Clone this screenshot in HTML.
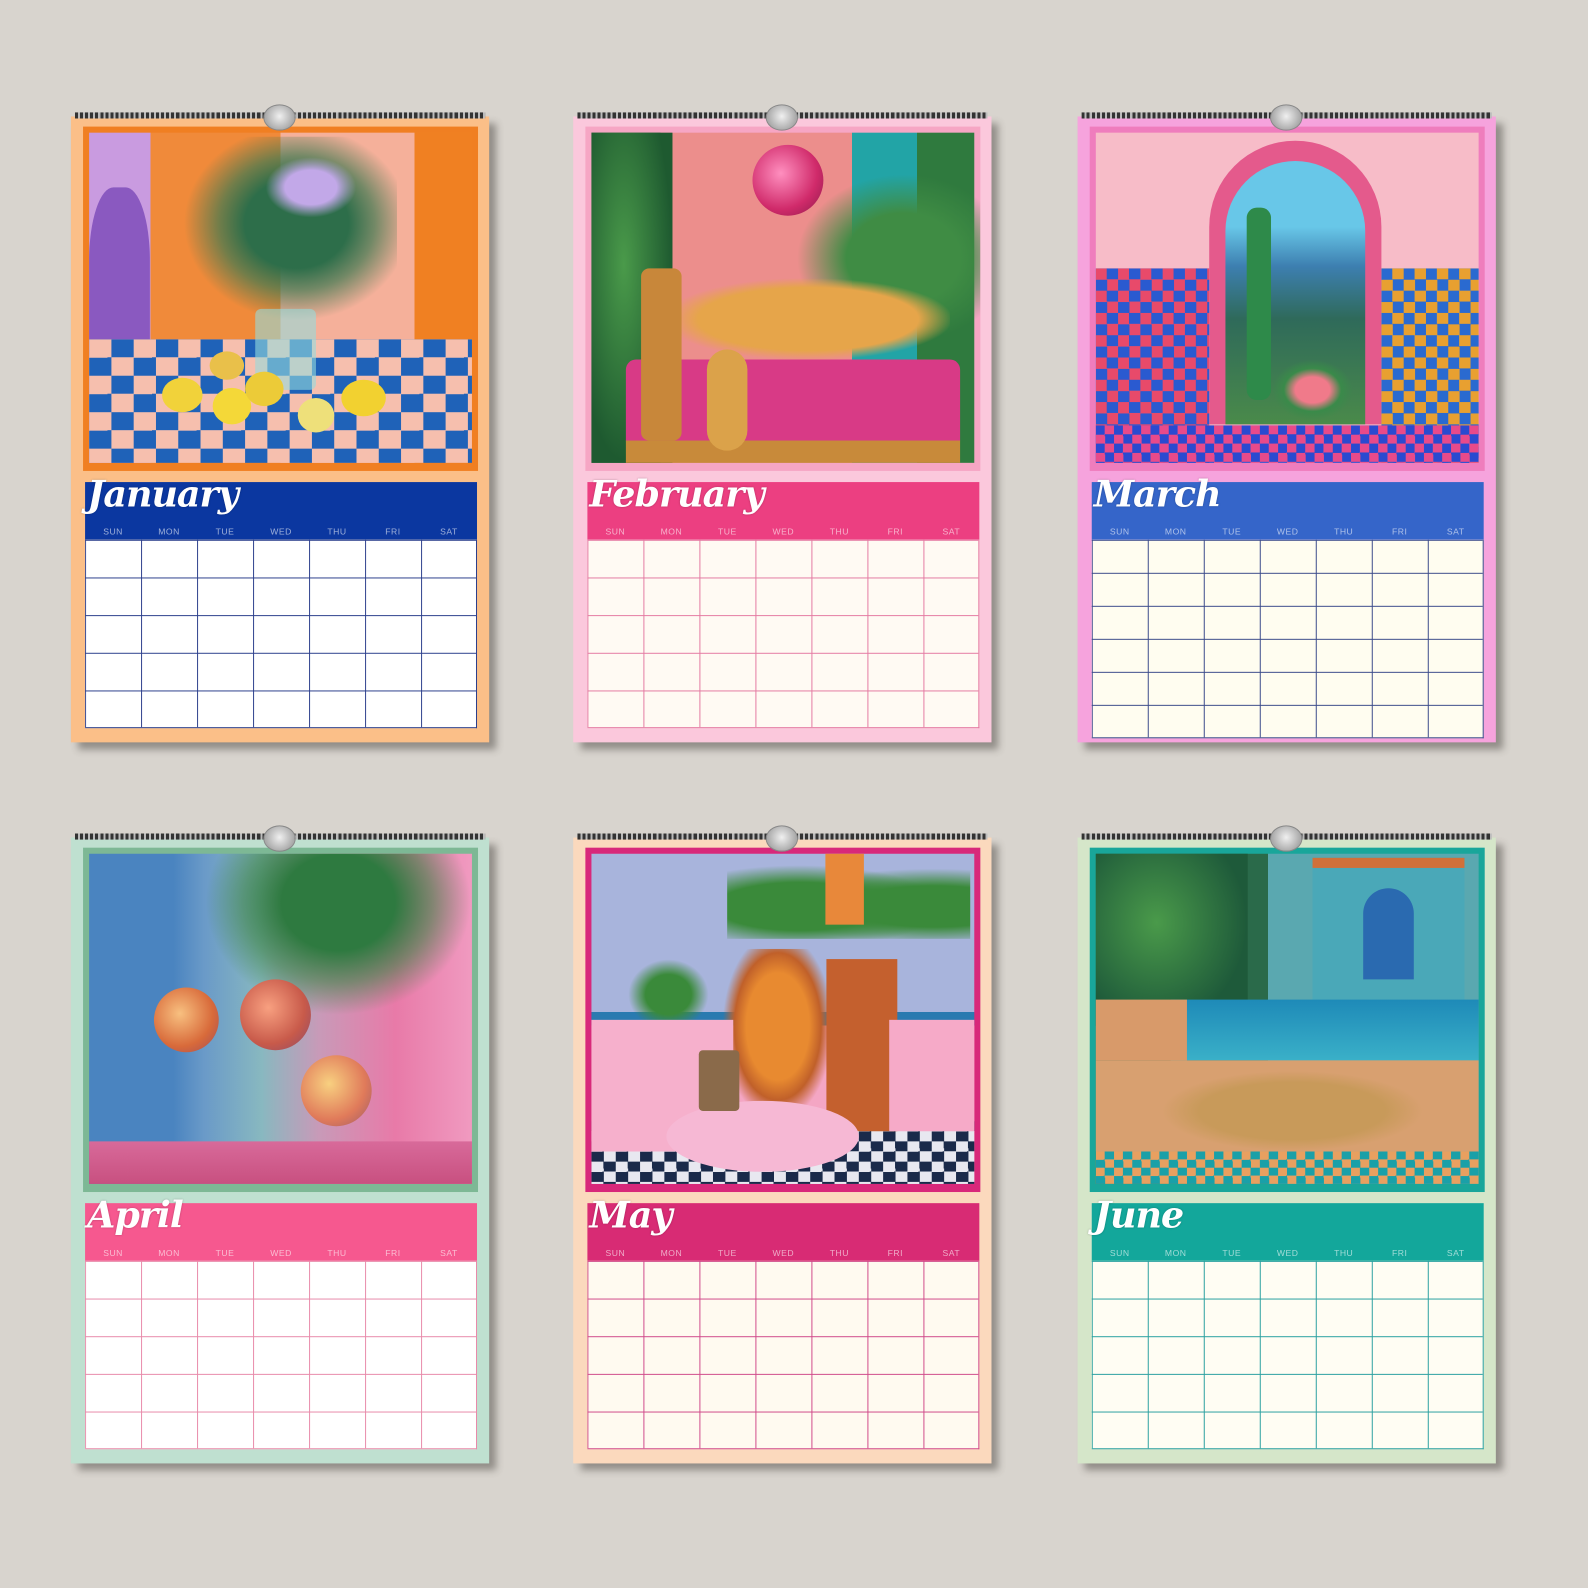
<!DOCTYPE html>
<html><head><meta charset="utf-8">
<style>
*{margin:0;padding:0;box-sizing:border-box}
body{width:1588px;height:1588px;background:#d8d4ce;position:relative;overflow:hidden;font-family:"Liberation Sans",sans-serif}
#wrap{position:absolute;left:0;top:0;width:1568px;height:1568px;transform:scale(1.01276);transform-origin:0 0}
.cal{position:absolute;width:413px;height:630px}
.page{position:absolute;left:0;top:12px;width:413px;height:618px;box-shadow:7px 7px 7px rgba(60,55,50,.45)}
.spiral{position:absolute;left:4px;right:4px;top:8px;height:6px;background:repeating-linear-gradient(90deg,#333 0 3px,#bbb 3px 5px);z-index:3}
.hook{position:absolute;left:190px;top:0;width:32px;height:26px;border-radius:50%;background:radial-gradient(circle at 50% 45%,#f0f0f0,#aaa 70%);z-index:4;border:1px solid #888}
.img{position:absolute;left:12px;top:22px;width:390px;height:340px;overflow:hidden}
.img div{position:absolute}
.hdr{position:absolute;left:14px;top:373px;width:387px;height:57px}
.ttl{position:absolute;left:2px;top:-9px;font-family:"DejaVu Serif","Liberation Serif",serif;font-weight:bold;font-style:italic;font-size:36px;color:#fff;letter-spacing:-1px;text-shadow:0 0 2px rgba(0,0,0,.25)}
.days{position:absolute;left:0;right:0;bottom:3px;display:flex;font-size:8.5px;color:rgba(255,255,255,.6);letter-spacing:.5px}
.days span{flex:1;text-align:center}
.grid{position:absolute;left:14px;top:430px;width:387px}
</style></head><body><div id="wrap">

<!-- JANUARY -->
<div class="cal" style="left:70px;top:103px">
<div class="page" style="background:#fbbf88"></div>
<div class="spiral"></div><div class="hook"></div>
<div class="img" style="background:#f07f22;">
 <div style="left:6px;top:6px;width:378px;height:326px;background:linear-gradient(90deg,#c99be0 0 16%,#f08a3a 16% 50%,#f5b09a 50% 85%,#f08022 85%)"></div>
 <div style="left:6px;top:60px;width:60px;height:180px;background:#7a48b8;border-radius:40% 40% 10% 10%;opacity:.8"></div>
 <div style="left:6px;top:210px;width:378px;height:122px;background:repeating-conic-gradient(#1f62b8 0 25%,#f6bfae 0 50%) 0 0/44px 36px"></div>
 <div style="left:90px;top:10px;width:220px;height:190px;background:radial-gradient(ellipse at 55% 45%,#2d6e4a 0 30%,rgba(60,120,80,.7) 45%,transparent 65%)"></div>
 <div style="left:180px;top:30px;width:90px;height:60px;background:radial-gradient(#c2a8e8 0 40%,transparent 70%)"></div>
 <div style="left:170px;top:180px;width:60px;height:80px;background:rgba(150,220,220,.6);border-radius:6px"></div>
 <div style="left:78px;top:248px;width:40px;height:34px;background:#f1d23a;border-radius:50%"></div>
 <div style="left:128px;top:258px;width:38px;height:36px;background:#f4d838;border-radius:50%"></div>
 <div style="left:160px;top:242px;width:38px;height:34px;background:#eccb38;border-radius:50%"></div>
 <div style="left:125px;top:222px;width:34px;height:28px;background:#e9c04a;border-radius:50%"></div>
 <div style="left:212px;top:268px;width:36px;height:34px;background:#eee07a;border-radius:50%"></div>
 <div style="left:255px;top:250px;width:44px;height:36px;background:#f2d130;border-radius:50%"></div>
</div>
<div class="hdr" style="background:#0b37a0"><div class="ttl">January</div><div class="days"><span>SUN</span><span>MON</span><span>TUE</span><span>WED</span><span>THU</span><span>FRI</span><span>SAT</span></div></div>
<div class="grid" style="height:186px;background:#fff;background-image:linear-gradient(90deg,#2c3f8c 1px,transparent 1px),linear-gradient(#2c3f8c 1px,transparent 1px);background-size:55.3px 37.2px;border-right:1px solid #2c3f8c;border-bottom:1px solid #2c3f8c"></div>
</div>

<!-- FEBRUARY -->
<div class="cal" style="left:566px;top:103px">
<div class="page" style="background:#fbc8dc"></div>
<div class="spiral"></div><div class="hook"></div>
<div class="img" style="background:#f6a6c4">
 <div style="left:6px;top:6px;width:378px;height:326px;background:linear-gradient(90deg,#2e6d3c 0 18%,#ec8e8c 18% 68%,#22a4a6 68% 85%,#2f7a3e 85%)"></div>
 <div style="left:6px;top:6px;width:80px;height:326px;background:radial-gradient(ellipse at 40% 40%,#4a9a4a,#1e5a30 70%)"></div>
 <div style="left:200px;top:40px;width:190px;height:180px;background:radial-gradient(ellipse at 60% 50%,#3f8c44 0 35%,transparent 65%)"></div>
 <div style="left:165px;top:18px;width:70px;height:70px;border-radius:50%;background:radial-gradient(circle at 40% 40%,#ff8fbf,#d02a6a 60%,#8a1a4a)"></div>
 <div style="left:40px;top:230px;width:330px;height:90px;background:#d83a86;border-radius:10px"></div>
 <div style="left:40px;top:310px;width:330px;height:22px;background:#c88a3a"></div>
 <div style="left:80px;top:150px;width:280px;height:80px;background:radial-gradient(ellipse,#e6a54a 0 55%,transparent 72%)"></div>
 <div style="left:55px;top:140px;width:40px;height:170px;background:#c8873a;border-radius:8px"></div>
 <div style="left:120px;top:220px;width:40px;height:100px;background:#dba24a;border-radius:20px"></div>
</div>
<div class="hdr" style="background:#ec3f81"><div class="ttl">February</div><div class="days"><span>SUN</span><span>MON</span><span>TUE</span><span>WED</span><span>THU</span><span>FRI</span><span>SAT</span></div></div>
<div class="grid" style="height:186px;background:#fffaf3;background-image:linear-gradient(90deg,#e47aa2 1px,transparent 1px),linear-gradient(#e47aa2 1px,transparent 1px);background-size:55.3px 37.2px;border-right:1px solid #e47aa2;border-bottom:1px solid #e47aa2"></div>
</div>

<!-- MARCH -->
<div class="cal" style="left:1064px;top:103px">
<div class="page" style="background:#f6a3dd"></div>
<div class="spiral"></div><div class="hook"></div>
<div class="img" style="background:#ef7dbd">
 <div style="left:6px;top:6px;width:378px;height:326px;background:#f7bcc8"></div>
 <div style="left:118px;top:14px;width:170px;height:280px;background:#e45a8c;border-radius:85px 85px 0 0"></div>
 <div style="left:134px;top:34px;width:138px;height:260px;background:linear-gradient(#68c7e8 0 25%,#3d7fb0 40%,#2f6a5a 60%,#4a8a4a);border-radius:70px 70px 0 0"></div>
 <div style="left:155px;top:80px;width:24px;height:190px;background:#2e8a4a;border-radius:10px"></div>
 <div style="left:6px;top:140px;width:112px;height:192px;background:repeating-conic-gradient(#2a5ad0 0 25%,#e84a6a 0 50%) 0 0/22px 22px"></div>
 <div style="left:288px;top:140px;width:96px;height:192px;background:repeating-conic-gradient(#e8a030 0 25%,#2a6ad0 0 50%) 0 0/22px 22px"></div>
 <div style="left:6px;top:295px;width:378px;height:37px;background:repeating-conic-gradient(#e84a8a 0 25%,#2a4ad0 0 50%) 0 0/18px 18px"></div>
 <div style="left:180px;top:230px;width:80px;height:60px;background:radial-gradient(#f07a8a 0 30%,#3a8a4a 50%,transparent 70%)"></div>
</div>
<div class="hdr" style="background:#3565c9"><div class="ttl">March</div><div class="days"><span>SUN</span><span>MON</span><span>TUE</span><span>WED</span><span>THU</span><span>FRI</span><span>SAT</span></div></div>
<div class="grid" style="height:196px;background:#fffdf0;background-image:linear-gradient(90deg,#3a4a8a 1px,transparent 1px),linear-gradient(#3a4a8a 1px,transparent 1px);background-size:55.3px 32.6px;border-right:1px solid #3a4a8a;border-bottom:1px solid #3a4a8a"></div>
</div>

<!-- APRIL -->
<div class="cal" style="left:70px;top:815px">
<div class="page" style="background:#bfe0d0"></div>
<div class="spiral"></div><div class="hook"></div>
<div class="img" style="background:#7db895">
 <div style="left:6px;top:6px;width:378px;height:326px;background:linear-gradient(90deg,#4a84c0 0 22%,#6a9ac8 30%,#88b8c0 45%,#c89ab8 60%,#e87aa8 80%,#f09ac0)"></div>
 <div style="left:6px;top:290px;width:378px;height:42px;background:linear-gradient(#d86a9a,#c85080)"></div>
 <div style="left:120px;top:6px;width:264px;height:160px;background:radial-gradient(ellipse at 50% 30%,#2e7a40 0 30%,rgba(60,130,70,.6) 50%,transparent 70%)"></div>
 <div style="left:70px;top:138px;width:64px;height:64px;border-radius:50%;background:radial-gradient(circle at 40% 40%,#f8c080,#d86a3a 60%,#a04a5a)"></div>
 <div style="left:155px;top:130px;width:70px;height:70px;border-radius:50%;background:radial-gradient(circle at 40% 40%,#f8a080,#c85a4a 60%,#8a4a6a)"></div>
 <div style="left:215px;top:205px;width:70px;height:70px;border-radius:50%;background:radial-gradient(circle at 40% 40%,#f8d080,#e07a5a 60%,#9a5a6a)"></div>
</div>
<div class="hdr" style="background:#f6588f"><div class="ttl">April</div><div class="days"><span>SUN</span><span>MON</span><span>TUE</span><span>WED</span><span>THU</span><span>FRI</span><span>SAT</span></div></div>
<div class="grid" style="height:186px;background:#fff;background-image:linear-gradient(90deg,#e88aaa 1px,transparent 1px),linear-gradient(#e88aaa 1px,transparent 1px);background-size:55.3px 37.2px;border-right:1px solid #e88aaa;border-bottom:1px solid #e88aaa"></div>
</div>

<!-- MAY -->
<div class="cal" style="left:566px;top:815px">
<div class="page" style="background:#fbd9bd"></div>
<div class="spiral"></div><div class="hook"></div>
<div class="img" style="background:#d8287a">
 <div style="left:6px;top:6px;width:378px;height:326px;background:linear-gradient(#a8b4dc 0 48%,#2a7ab0 48% 52%,#f4a6c4 52%)"></div>
 <div style="left:6px;top:270px;width:378px;height:62px;background:repeating-conic-gradient(#1a2a4a 0 25%,#e8e8f0 0 50%) 0 0/24px 20px"></div>
 <div style="left:140px;top:10px;width:240px;height:80px;background:radial-gradient(ellipse at 30% 60%,#3a8a3a 0 35%,transparent 60%),radial-gradient(ellipse at 85% 60%,#3a8a3a 0 30%,transparent 55%)"></div>
 <div style="left:237px;top:6px;width:38px;height:70px;background:#e8883a"></div>
 <div style="left:42px;top:110px;width:80px;height:70px;background:radial-gradient(#3a8a3a 0 40%,transparent 70%)"></div>
 <div style="left:135px;top:100px;width:110px;height:170px;background:radial-gradient(ellipse at 50% 45%,#e88a30 0 40%,#c0602a 55%,transparent 70%)"></div>
 <div style="left:238px;top:110px;width:70px;height:170px;background:#c4602e"></div>
 <div style="left:300px;top:170px;width:84px;height:110px;background:#f6aac8"></div>
 <div style="left:6px;top:170px;width:140px;height:130px;background:#f6b0cc"></div>
 <div style="left:80px;top:250px;width:190px;height:70px;background:#f6b8d4;border-radius:50%"></div>
 <div style="left:112px;top:200px;width:40px;height:60px;background:#8a6a4a;border-radius:4px"></div>
</div>
<div class="hdr" style="background:#d82b74"><div class="ttl">May</div><div class="days"><span>SUN</span><span>MON</span><span>TUE</span><span>WED</span><span>THU</span><span>FRI</span><span>SAT</span></div></div>
<div class="grid" style="height:186px;background:#fffaf0;background-image:linear-gradient(90deg,#d04a8a 1px,transparent 1px),linear-gradient(#d04a8a 1px,transparent 1px);background-size:55.3px 37.2px;border-right:1px solid #d04a8a;border-bottom:1px solid #d04a8a"></div>
</div>

<!-- JUNE -->
<div class="cal" style="left:1064px;top:815px">
<div class="page" style="background:#d5e6c9"></div>
<div class="spiral"></div><div class="hook"></div>
<div class="img" style="background:#19a69a">
 <div style="left:6px;top:6px;width:378px;height:326px;background:linear-gradient(90deg,#2a6a4a 0 45%,#5aa8b0 45%)"></div>
 <div style="left:220px;top:10px;width:150px;height:140px;background:#4aa8b8;border-top:10px solid #d0703a"></div>
 <div style="left:270px;top:40px;width:50px;height:90px;background:#2a6ab0;border-radius:25px 25px 0 0"></div>
 <div style="left:6px;top:6px;width:150px;height:170px;background:radial-gradient(ellipse at 40% 40%,#4a9a4a,#1e5a3a 70%)"></div>
 <div style="left:80px;top:150px;width:304px;height:60px;background:linear-gradient(#1e8ab8,#3ab0c8)"></div>
 <div style="left:6px;top:150px;width:90px;height:60px;background:#d89a6a"></div>
 <div style="left:6px;top:210px;width:378px;height:90px;background:#d8a070"></div>
 <div style="left:6px;top:300px;width:378px;height:32px;background:repeating-conic-gradient(#1aa0a8 0 25%,#e8a060 0 50%) 0 0/18px 16px"></div>
 <div style="left:70px;top:220px;width:260px;height:80px;background:radial-gradient(ellipse,#c89a5a 0 50%,transparent 70%)"></div>
</div>
<div class="hdr" style="background:#13a79b"><div class="ttl">June</div><div class="days"><span>SUN</span><span>MON</span><span>TUE</span><span>WED</span><span>THU</span><span>FRI</span><span>SAT</span></div></div>
<div class="grid" style="height:186px;background:#fffdf3;background-image:linear-gradient(90deg,#2aa0a0 1px,transparent 1px),linear-gradient(#2aa0a0 1px,transparent 1px);background-size:55.3px 37.2px;border-right:1px solid #2aa0a0;border-bottom:1px solid #2aa0a0"></div>
</div>

</div></body></html>
